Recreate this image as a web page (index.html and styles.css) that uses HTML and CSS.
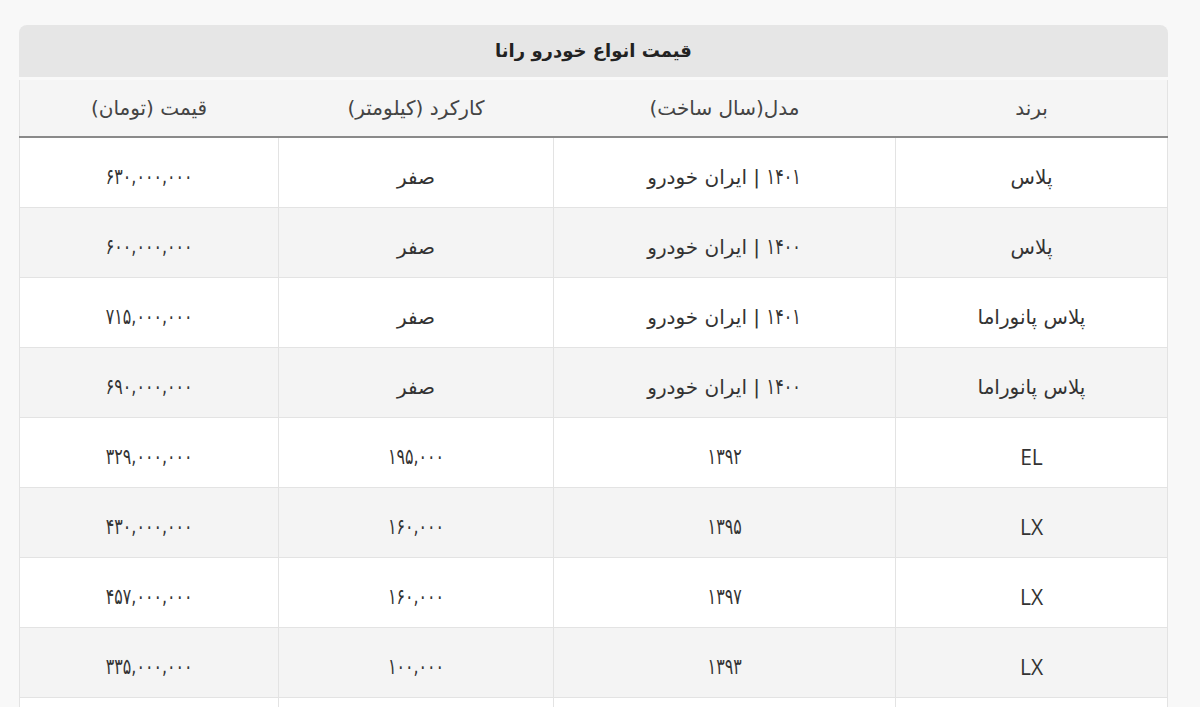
FILE: index.html
```html
<!DOCTYPE html>
<html lang="fa" dir="rtl">
<head>
<meta charset="utf-8">
<link rel="stylesheet" href="styles.css">
</head>
<body>
<div class="wrap">
  <table class="price-table">
    <caption class="cap">قیمت انواع خودرو رانا</caption>
    <colgroup>
      <col class="c-brand"><col class="c-model"><col class="c-km"><col class="c-price">
    </colgroup>
    <thead>
      <tr><th>برند</th><th>مدل(سال ساخت)</th><th>کارکرد (کیلومتر)</th><th>قیمت (تومان)</th></tr>
    </thead>
    <tbody>
      <tr><td>پلاس</td><td><span class="num yr">۱۴۰۱</span> | ایران خودرو</td><td>صفر</td><td><span class="num">۶۳۰,۰۰۰,۰۰۰</span></td></tr>
      <tr><td>پلاس</td><td><span class="num yr">۱۴۰۰</span> | ایران خودرو</td><td>صفر</td><td><span class="num">۶۰۰,۰۰۰,۰۰۰</span></td></tr>
      <tr><td>پلاس پانوراما</td><td><span class="num yr">۱۴۰۱</span> | ایران خودرو</td><td>صفر</td><td><span class="num">۷۱۵,۰۰۰,۰۰۰</span></td></tr>
      <tr><td>پلاس پانوراما</td><td><span class="num yr">۱۴۰۰</span> | ایران خودرو</td><td>صفر</td><td><span class="num">۶۹۰,۰۰۰,۰۰۰</span></td></tr>
      <tr><td class="lat">EL</td><td><span class="num">۱۳۹۲</span></td><td><span class="num">۱۹۵,۰۰۰</span></td><td><span class="num">۳۲۹,۰۰۰,۰۰۰</span></td></tr>
      <tr><td class="lat">LX</td><td><span class="num">۱۳۹۵</span></td><td><span class="num">۱۶۰,۰۰۰</span></td><td><span class="num">۴۳۰,۰۰۰,۰۰۰</span></td></tr>
      <tr><td class="lat">LX</td><td><span class="num">۱۳۹۷</span></td><td><span class="num">۱۶۰,۰۰۰</span></td><td><span class="num">۴۵۷,۰۰۰,۰۰۰</span></td></tr>
      <tr><td class="lat">LX</td><td><span class="num">۱۳۹۳</span></td><td><span class="num">۱۰۰,۰۰۰</span></td><td><span class="num">۳۳۵,۰۰۰,۰۰۰</span></td></tr>
      <tr><td></td><td></td><td></td><td></td></tr>
    </tbody>
  </table>
</div>
</body>
</html>
```

FILE: styles.css
```css
html, body {
  margin: 0;
  padding: 0;
  background: #f8f8f8;
}
body {
  font-family: "DejaVu Sans", "Open Sans", sans-serif;
  color: #333;
}
.wrap {
  padding: 25px 32px 0 20px;
}
.price-table {
  width: 1148px;
  border-collapse: collapse;
  table-layout: fixed;
  background: #fff;
}
.c-brand { width: 272px; }
.c-model { width: 342px; }
.c-km { width: 275px; }
.c-price { width: 259px; }
.cap {
  background: #e6e6e6;
  border-radius: 8px 8px 0 0;
  height: 52px;
  line-height: 52px;
  font-size: 18px;
  font-weight: bold;
  color: #222;
  border-bottom: 3px solid #f9f9f9;
}
.price-table th {
  background: #f5f5f5;
  font-weight: normal;
  font-size: 20px;
  color: #444;
  height: 56px;
  padding: 0;
  border-bottom: 2px solid #8a8a8a;
  border-left: 1px solid #f5f5f5;
}
.price-table th:first-child { border-right: 1px solid #e3e3e3; }
.price-table th:last-child { border-left: 1px solid #e3e3e3; }
.price-table td {
  height: 61px;
  padding: 8px 0 0;
  text-align: center;
  font-size: 20px;
  border: 1px solid #e3e3e3;
}
.price-table tbody tr:nth-child(even) td { background: #f4f4f4; }
.price-table .num {
  display: inline-block;
  font-size: 22px;
  transform: scaleX(0.72);
}
.price-table .yr {
  margin: 0 -6px;
}
.price-table td.lat {
  font-family: "Open Sans", "DejaVu Sans", sans-serif;
  font-size: 21px;
}
```
